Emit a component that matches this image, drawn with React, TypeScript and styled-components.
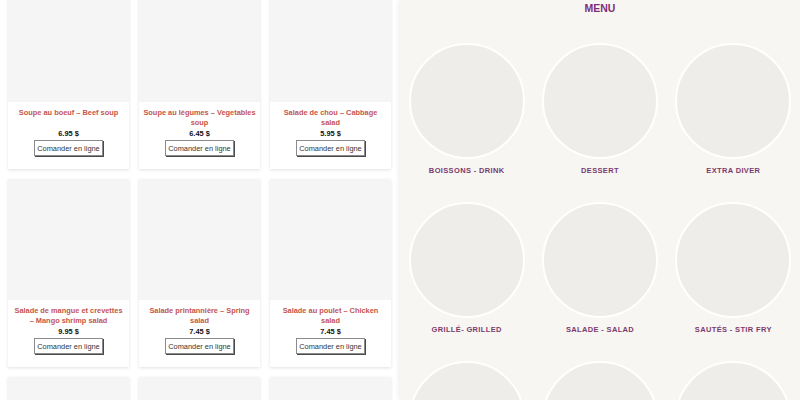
import React from 'react'
import styled, { createGlobalStyle } from 'styled-components'

const GlobalStyle = createGlobalStyle`
  html, body {
    margin: 0;
    padding: 0;
    width: 800px;
    height: 400px;
    overflow: hidden;
    font-family: "Liberation Sans", Arial, sans-serif;
    background: #ffffff;
  }
`

const Page = styled.div`
  display: flex;
  width: 800px;
  height: 400px;
  overflow: hidden;
`

const Products = styled.div`
  width: 400px;
  flex-shrink: 0;
  padding: 0 9px 0 8px;
  box-sizing: border-box;
  background: #ffffff;
`

const ProductGrid = styled.div`
  display: grid;
  grid-template-columns: repeat(3, 121px);
  column-gap: 10px;
  row-gap: 10px;
  margin-top: -19px;
`

const Card = styled.div`
  background: #ffffff;
  box-shadow: 0 1px 3px rgba(0, 0, 0, 0.12);
  display: flex;
  flex-direction: column;
  align-items: center;
`

const Thumb = styled.div`
  width: 100%;
  height: 121px;
  background: #f5f5f5;
`

const CardBody = styled.div`
  width: 100%;
  box-sizing: border-box;
  padding: 6px 4px 13px;
  display: flex;
  flex-direction: column;
  align-items: center;
`

const ProductName = styled.div`
  min-height: 20px;
  font-size: 7.4px;
  line-height: 10px;
  font-weight: bold;
  color: #c4554d;
  text-align: center;
`

const Price = styled.div`
  margin-top: 1px;
  font-size: 7.4px;
  line-height: 10px;
  font-weight: bold;
  color: #111;
`

const OrderButton = styled.button`
  margin-top: 1px;
  height: 16px;
  padding: 0 2px;
  background: #fff;
  border: 1px solid #8a8a8a;
  box-shadow: 1px 1px 0 #4a4a4a;
  font-family: "Liberation Sans", Arial, sans-serif;
  font-size: 7.4px;
  color: #333;
  cursor: pointer;
`

const MenuPanel = styled.div`
  flex: 1;
  background: #f8f6f3;
  box-shadow: -2px 0 4px rgba(0, 0, 0, 0.06);
  display: flex;
  flex-direction: column;
  align-items: center;
`

const MenuTitle = styled.div`
  font-size: 10.5px;
  line-height: 16px;
  font-weight: bold;
  color: #7f2f79;
`

const CategoryGrid = styled.div`
  width: 100%;
  margin-top: 27px;
  display: grid;
  grid-template-columns: repeat(3, 1fr);
  row-gap: 26px;
`

const Category = styled.div`
  display: flex;
  flex-direction: column;
  align-items: center;
`

const Circle = styled.div`
  width: 116px;
  height: 116px;
  box-sizing: border-box;
  border-radius: 50%;
  border: 2px solid #ffffff;
  background: #efedea;
`

const CategoryLabel = styled.div`
  margin-top: 7px;
  font-size: 7.5px;
  line-height: 10px;
  font-weight: bold;
  letter-spacing: 0.35px;
  color: #7a3a6d;
  text-transform: uppercase;
`

const products = [
  { name: 'Soupe au boeuf – Beef soup', price: '6.95 $' },
  { name: 'Soupe au légumes – Vegetables soup', price: '6.45 $' },
  { name: 'Salade de chou – Cabbage salad', price: '5.95 $' },
  { name: 'Salade de mangue et crevettes – Mango shrimp salad', price: '9.95 $' },
  { name: 'Salade printannière – Spring salad', price: '7.45 $' },
  { name: 'Salade au poulet – Chicken salad', price: '7.45 $' },
  { name: '', price: '' },
  { name: '', price: '' },
  { name: '', price: '' },
]

const categories = [
  'Boissons - Drink',
  'Dessert',
  'Extra diver',
  'Grillé- Grilled',
  'Salade - Salad',
  'Sautés - Stir fry',
  '',
  '',
  '',
]

export default function App() {
  return (
    <>
      <GlobalStyle />
      <Page>
        <Products>
          <ProductGrid>
            {products.map((p, i) => (
              <Card key={i}>
                <Thumb />
                <CardBody>
                  <ProductName>{p.name}</ProductName>
                  <Price>{p.price}</Price>
                  <OrderButton>Comander en ligne</OrderButton>
                </CardBody>
              </Card>
            ))}
          </ProductGrid>
        </Products>
        <MenuPanel>
          <MenuTitle>MENU</MenuTitle>
          <CategoryGrid>
            {categories.map((c, i) => (
              <Category key={i}>
                <Circle />
                <CategoryLabel>{c}</CategoryLabel>
              </Category>
            ))}
          </CategoryGrid>
        </MenuPanel>
      </Page>
    </>
  )
}
